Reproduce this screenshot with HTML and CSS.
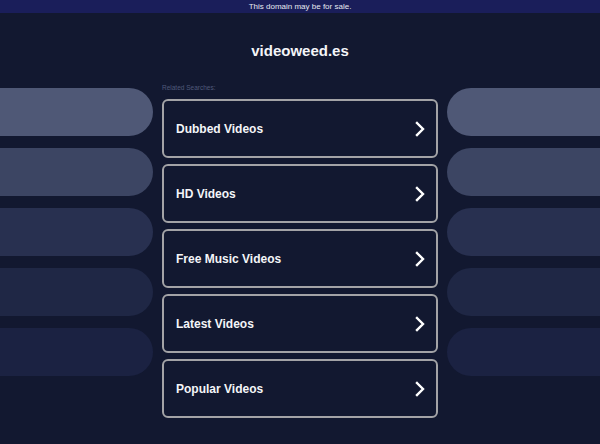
FILE: index.html
```html
<!DOCTYPE html>
<html>
<head>
<meta charset="utf-8">
<link rel="stylesheet" href="styles.css">
</head>
<body>
<div class="topbar">This domain may be for sale.</div>
<header class="header"><h1 class="title">videoweed.es</h1></header>
<main class="main">
  <div class="side side-left">
    <div class="pill p1"></div>
    <div class="pill p2"></div>
    <div class="pill p3"></div>
    <div class="pill p4"></div>
    <div class="pill p5"></div>
  </div>
  <div class="center">
    <div class="label">Related Searches:</div>
    <div class="cards">
      <a class="card" href="#"><span>Dubbed Videos</span><svg class="chev" viewBox="0 0 10 16" width="10" height="16"><polyline points="2,2 8,8 2,14"/></svg></a>
      <a class="card" href="#"><span>HD Videos</span><svg class="chev" viewBox="0 0 10 16" width="10" height="16"><polyline points="2,2 8,8 2,14"/></svg></a>
      <a class="card" href="#"><span>Free Music Videos</span><svg class="chev" viewBox="0 0 10 16" width="10" height="16"><polyline points="2,2 8,8 2,14"/></svg></a>
      <a class="card" href="#"><span>Latest Videos</span><svg class="chev" viewBox="0 0 10 16" width="10" height="16"><polyline points="2,2 8,8 2,14"/></svg></a>
      <a class="card" href="#"><span>Popular Videos</span><svg class="chev" viewBox="0 0 10 16" width="10" height="16"><polyline points="2,2 8,8 2,14"/></svg></a>
    </div>
  </div>
  <div class="side side-right">
    <div class="pill p1"></div>
    <div class="pill p2"></div>
    <div class="pill p3"></div>
    <div class="pill p4"></div>
    <div class="pill p5"></div>
  </div>
</main>
</body>
</html>
```
FILE: styles.css
```css
html, body {
  margin: 0;
  padding: 0;
}
body {
  background: #121830;
  font-family: "Liberation Sans", Arial, sans-serif;
  color: #ffffff;
  width: 600px;
  height: 444px;
  overflow: hidden;
}
.topbar {
  height: 13px;
  line-height: 13px;
  background: #1a1e5a;
  color: #e6e8f0;
  font-size: 8px;
  text-align: center;
}
.header {
  padding: 28px 0 19px;
  text-align: center;
}
.title {
  margin: 0;
  font-size: 15px;
  line-height: 20px;
  font-weight: bold;
  color: #f4f5f8;
}
.main {
  display: flex;
  gap: 9px;
}
.side {
  flex: 0 0 153px;
  padding-top: 8px;
  display: flex;
  flex-direction: column;
  gap: 12px;
}
.pill {
  height: 48px;
}
.side-left .pill {
  border-radius: 0 24px 24px 0;
}
.side-right .pill {
  border-radius: 24px 0 0 24px;
}
.p1 { background: #4f5876; }
.p2 { background: #3c4563; }
.p3 { background: #283050; }
.p4 { background: #1f2745; }
.p5 { background: #1b2242; }
.center {
  flex: 0 0 276px;
}
.label {
  height: 19px;
  line-height: 15px;
  font-size: 6.5px;
  color: #50587a;
}
.cards {
  display: flex;
  flex-direction: column;
  gap: 6px;
}
.card {
  box-sizing: border-box;
  height: 59px;
  border: 2px solid #a3a3a6;
  border-radius: 6px;
  padding: 1px 11px 0 12px;
  display: flex;
  align-items: center;
  justify-content: space-between;
  text-decoration: none;
  color: #f4f5f8;
  font-size: 12px;
  font-weight: bold;
}
.chev {
  fill: none;
  stroke: #ffffff;
  stroke-width: 2.4;
  stroke-linecap: square;
}
```
